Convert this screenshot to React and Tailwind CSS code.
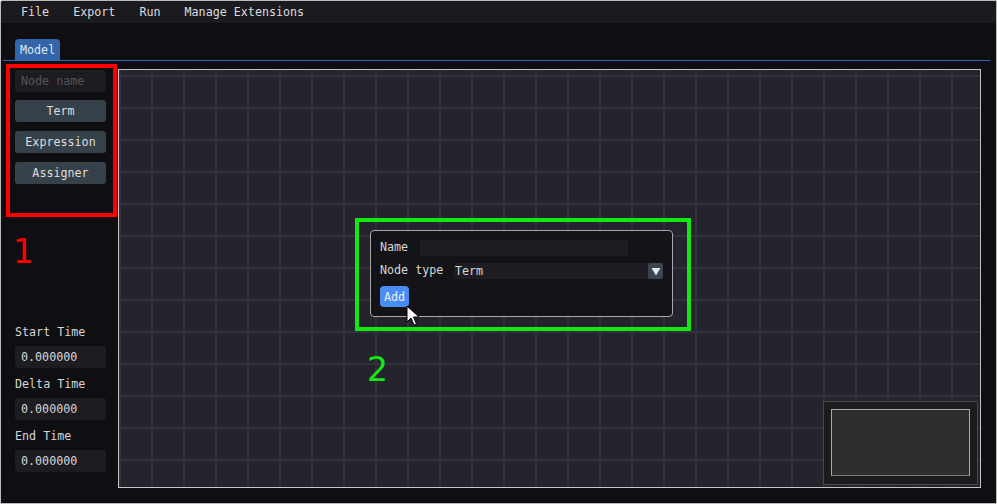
const mono = { fontFamily: '"DejaVu Sans Mono", "Liberation Mono", monospace' };

function Cursor() {
  return (
    <svg width="14" height="22" viewBox="0 0 14 22" className="absolute left-[405px] top-[304px]">
      <path
        d="M1 1 L1 17 L5 13 L8 20 L10.5 19 L7.5 12 L13 12 Z"
        fill="#ffffff"
        stroke="#000000"
        strokeWidth="1"
        strokeLinejoin="round"
      />
    </svg>
  );
}

function TimeField({ label }) {
  return (
    <div className="flex flex-col">
      <div className="h-[16px] leading-[16px] text-[#d6d6d6]">{label}</div>
      <div className="mt-[6px] h-[22px] rounded-[3px] bg-[#1d1c22] px-[6px] leading-[23px] text-[#d6d6d6]">
        0.000000
      </div>
    </div>
  );
}

function SideButton({ children }) {
  return (
    <button className="h-[22px] w-full rounded-[3px] bg-[#36414a] text-center leading-[23px] text-[#dedede]">
      {children}
    </button>
  );
}

export default function App() {
  return (
    <div
      className="relative h-[504px] w-[997px] overflow-hidden rounded-tl-[3px] border border-[#bcbcbc] bg-[#0f0e12] text-[11.7px]"
      style={mono}
    >
      {/* menu bar */}
      <div className="flex h-[22px] items-center gap-[24px] bg-[#1b1a1f] pl-[20px] pt-[2px] text-[#dcdcdc]">
        <span>File</span>
        <span>Export</span>
        <span>Run</span>
        <span>Manage Extensions</span>
      </div>

      {/* tab bar */}
      <div className="mt-[16px] flex pl-[14px]">
        <div className="h-[21px] rounded-t-[4px] bg-[#3366a8] px-[5px] leading-[22px] text-[#dfe6ef]">Model</div>
      </div>
      <div className="mx-[2px] mr-[6px] h-px bg-[#2d67b6]" />

      <div className="mt-[8px] flex h-[419px] pr-[15px]">
        {/* left panel */}
        <div className="ml-[14px] flex w-[91px] shrink-0 flex-col pb-[16px] pt-[1px]">
          <div className="h-[22px] rounded-[3px] bg-[#1d1c22] px-[6px] leading-[23px] text-[#55545c]">Node name</div>
          <div className="mt-[8px] flex flex-col gap-[9px]">
            <SideButton>Term</SideButton>
            <SideButton>Expression</SideButton>
            <SideButton>Assigner</SideButton>
          </div>
          <div className="mt-auto flex flex-col gap-[8px]">
            <TimeField label="Start Time" />
            <TimeField label="Delta Time" />
            <TimeField label="End Time" />
          </div>
        </div>

        {/* canvas */}
        <div className="relative ml-[12px] flex-1 border border-[#c4c4c4] bg-[#25242e] bg-[linear-gradient(to_right,#32313c_2px,transparent_2px),linear-gradient(to_bottom,#32313c_2px,transparent_2px)] bg-[size:32px_32px] bg-[position:0px_5px]">
          {/* add node dialog */}
          <div className="absolute left-[251px] top-[160px] flex h-[87px] w-[303px] flex-col rounded-[4px] border border-[#a8a8a8] bg-[#141318] px-[9px] pt-[8px] text-[#d6d6d6]">
            <div className="flex h-[17px] items-center">
              <span className="w-[40px]">Name</span>
              <div className="h-[16px] w-[208px] rounded-[2px] bg-[#1e1d23]" />
            </div>
            <div className="mt-[7px] flex h-[16px] items-center">
              <span className="w-[74px]">Node type</span>
              <div className="flex h-[16px] w-[209px] items-center rounded-[2px] bg-[#1e1d23] pl-[1px]">
                <span className="flex-1 leading-[17px]">Term</span>
                <div className="flex h-[16px] w-[15px] items-center justify-center rounded-[2px] bg-[#3a454f]">
                  <svg width="10" height="9" viewBox="0 0 10 9">
                    <path d="M0.5 1 L9.5 1 L5 8.5 Z" fill="#e6e6e6" />
                  </svg>
                </div>
              </div>
            </div>
            <div className="mt-[7px] flex">
              <button className="h-[21px] w-[29px] rounded-[4px] bg-[#4a8df2] text-center leading-[22px] text-[#e8eefa]">Add</button>
            </div>
          </div>

          {/* minimap */}
          <div className="absolute bottom-[2px] right-[2px] flex h-[84px] w-[155px] border border-[#4a4a4a] bg-[#1c1c1e] p-[7px] pb-[8px]">
            <div className="flex-1 border border-[#ababab] border-b-[#7d7d7d] bg-[#2e2e30]" />
          </div>
        </div>
      </div>

      {/* annotations */}
      <div className="pointer-events-none absolute left-[5px] top-[63px] h-[153px] w-[111px] border-4 border-[#ff0000]" />
      <div
        className="absolute left-[12px] top-[231px] text-[33px] leading-[40px] text-[#ff0000]"
        style={{ fontFamily: '"DejaVu Sans", sans-serif' }}
      >
        1
      </div>
      <div className="pointer-events-none absolute left-[354px] top-[217px] h-[113px] w-[336px] border-4 border-[#13e813]" />
      <div
        className="absolute left-[366px] top-[349px] text-[33px] leading-[40px] text-[#13e813]"
        style={{ fontFamily: '"DejaVu Sans", sans-serif' }}
      >
        2
      </div>
      <Cursor />
    </div>
  );
}
